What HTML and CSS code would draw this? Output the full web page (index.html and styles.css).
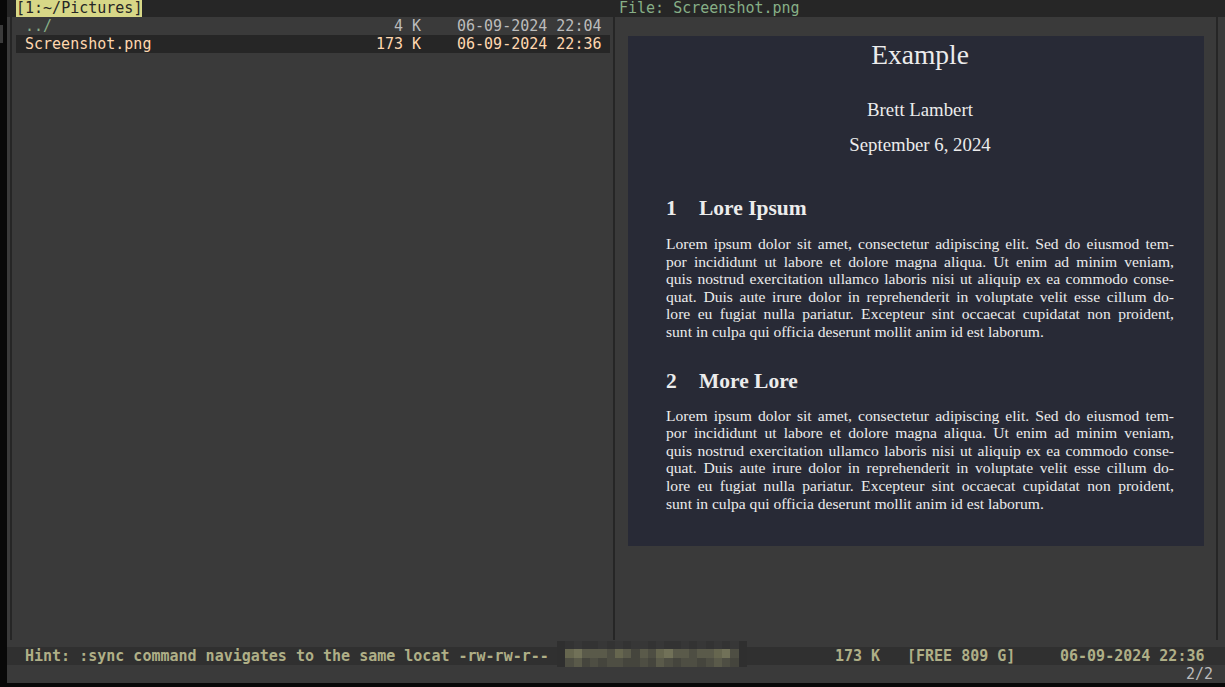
FILE: index.html
```html
<!DOCTYPE html>
<html>
<head>
<meta charset="utf-8">
<link rel="stylesheet" href="styles.css">
</head>
<body>
<div class="screen">
  <div class="strip"><div class="stub"></div></div>
  <div class="term">
    <div class="topbar">
      <span class="tab">[1:~/Pictures]</span>
      <span class="filelabel">File: Screenshot.png</span>
    </div>
    <div class="main">
      <div class="edge"></div>
      <div class="pane-left">
        <div class="row">
          <span class="name up">../</span>
          <span class="size">4 K</span>
          <span class="date">06-09-2024 22:04</span>
        </div>
        <div class="row sel">
          <span class="name">Screenshot.png</span>
          <span class="size">173 K</span>
          <span class="date">06-09-2024 22:36</span>
        </div>
      </div>
      <div class="edge"></div>
      <div class="pane-right">
        <div class="doc">
          <div class="title">Example</div>
          <div class="author">Brett Lambert</div>
          <div class="docdate">September 6, 2024</div>
          <div class="sec sec1"><span class="num">1</span>Lore Ipsum</div>
          <div class="para">
            <span class="ln">Lorem ipsum dolor sit amet, consectetur adipiscing elit. Sed do eiusmod tem-</span>
            <span class="ln">por incididunt ut labore et dolore magna aliqua. Ut enim ad minim veniam,</span>
            <span class="ln">quis nostrud exercitation ullamco laboris nisi ut aliquip ex ea commodo conse-</span>
            <span class="ln">quat. Duis aute irure dolor in reprehenderit in voluptate velit esse cillum do-</span>
            <span class="ln">lore eu fugiat nulla pariatur. Excepteur sint occaecat cupidatat non proident,</span>
            <span class="ln last">sunt in culpa qui officia deserunt mollit anim id est laborum.</span>
          </div>
          <div class="sec sec2"><span class="num">2</span>More Lore</div>
          <div class="para para2">
            <span class="ln">Lorem ipsum dolor sit amet, consectetur adipiscing elit. Sed do eiusmod tem-</span>
            <span class="ln">por incididunt ut labore et dolore magna aliqua. Ut enim ad minim veniam,</span>
            <span class="ln">quis nostrud exercitation ullamco laboris nisi ut aliquip ex ea commodo conse-</span>
            <span class="ln">quat. Duis aute irure dolor in reprehenderit in voluptate velit esse cillum do-</span>
            <span class="ln">lore eu fugiat nulla pariatur. Excepteur sint occaecat cupidatat non proident,</span>
            <span class="ln last">sunt in culpa qui officia deserunt mollit anim id est laborum.</span>
          </div>
        </div>
      </div>
      <div class="edge"></div>
    </div>
    <div class="gap"></div>
    <div class="status">
      <span class="hint">Hint: :sync command navigates to the same locat -rw-rw-r--</span>
      <span class="s-size">173 K</span>
      <span class="s-free">[FREE 809 G]</span>
      <span class="s-date">06-09-2024 22:36</span>
      <div class="mosaic">
        <i class="a"></i><i class="c"></i><i class="b"></i><i class="c"></i><i class="c"></i><i class="b"></i><i class="c"></i><i class="b"></i><i class="c"></i><i class="b"></i><i class="b"></i><i class="c"></i><i class="b"></i><i class="c"></i><i class="c"></i><i class="b"></i><i class="c"></i><i class="b"></i><i class="c"></i><i class="b"></i><i class="c"></i><i class="b"></i><i class="a"></i>
        <i class="a"></i><i class="e"></i><i class="d"></i><i class="f"></i><i class="f"></i><i class="f"></i><i class="g"></i><i class="e"></i><i class="f"></i><i class="h"></i><i class="f"></i><i class="g"></i><i class="e"></i><i class="d"></i><i class="f"></i><i class="f"></i><i class="g"></i><i class="f"></i><i class="f"></i><i class="e"></i><i class="d"></i><i class="g"></i><i class="a"></i>
        <i class="a"></i><i class="g"></i><i class="f"></i><i class="h"></i><i class="g"></i><i class="h"></i><i class="g"></i><i class="g"></i><i class="h"></i><i class="h"></i><i class="g"></i><i class="h"></i><i class="f"></i><i class="g"></i><i class="h"></i><i class="g"></i><i class="g"></i><i class="h"></i><i class="g"></i><i class="f"></i><i class="g"></i><i class="h"></i><i class="a"></i>
      </div>
    </div>
    <div class="bottom">
      <span class="pos">2/2</span>
    </div>
  </div>
</div>
</body>
</html>
```
FILE: styles.css
```css
html, body {
  margin: 0;
  padding: 0;
  background: #000;
  overflow: hidden;
}
.screen {
  display: flex;
  width: 1225px;
  height: 687px;
  background: #080808;
}
.strip {
  width: 7px;
  flex: none;
}
.stub {
  margin-top: 25px;
  width: 3px;
  height: 18px;
  background: #3a3a3a;
}
.term {
  width: 1218px;
  height: 683px;
  flex: none;
  background: #3a3a3a;
  display: flex;
  flex-direction: column;
  font-family: "DejaVu Sans Mono", monospace;
  font-size: 15px;
  line-height: 18px;
  position: relative;
  overflow: hidden;
}
.topbar {
  height: 17px;
  flex: none;
  background: #262626;
  display: flex;
  align-items: flex-start;
  padding-left: 9px;
  white-space: pre;
}
.tab {
  background: #d7d787;
  color: #262626;
  height: 17px;
  line-height: 16px;
  width: 126px;
}
.filelabel {
  margin-left: 477px;
  color: #87af87;
  line-height: 16px;
}
.main {
  height: 623px;
  flex: none;
  display: flex;
}
.edge {
  width: 9px;
  flex: none;
  box-sizing: border-box;
  padding-left: 3px;
}
.edge::before {
  content: "";
  display: block;
  width: 2px;
  height: 100%;
  background: #262626;
}
.pane-left {
  width: 594px;
  flex: none;
  display: flex;
  flex-direction: column;
}
.row {
  display: flex;
  height: 18px;
  color: #bcbcbc;
  white-space: pre;
}
.row.sel {
  background: #262626;
  color: #ffd7af;
}
.name {
  width: 351px;
  padding-left: 9px;
}
.name.up {
  color: #87af87;
}
.size {
  width: 45px;
  text-align: right;
}
.date {
  margin-left: 36px;
  width: 144px;
}
.pane-right {
  width: 594px;
  flex: none;
  padding: 19px 0 0 9px;
  box-sizing: border-box;
}
.doc {
  width: 576px;
  height: 510px;
  box-sizing: border-box;
  background: #282a36;
  color: #ececec;
  font-family: "Liberation Serif", serif;
  padding: 3px 30px 0 38px;
  display: flex;
  flex-direction: column;
}
.title {
  font-size: 27.5px;
  line-height: 32px;
  text-align: center;
}
.author {
  font-size: 18.8px;
  line-height: 22px;
  text-align: center;
  margin-top: 28px;
}
.docdate {
  font-size: 18.8px;
  line-height: 22px;
  text-align: center;
  margin-top: 13px;
}
.sec {
  font-size: 21.5px;
  line-height: 24px;
  font-weight: bold;
  margin-top: 40px;
}
.sec2 {
  margin-top: 28px;
}
.num {
  display: inline-block;
  width: 33px;
}
.para {
  margin-top: 15px;
  font-size: 15.6px;
  line-height: 17.6px;
}
.para2 {
  margin-top: 14px;
}
.ln {
  display: block;
  white-space: nowrap;
  text-align: justify;
  text-align-last: justify;
}
.ln.last {
  text-align: left;
  text-align-last: left;
}
.gap {
  height: 7px;
  flex: none;
}
.status {
  height: 18px;
  flex: none;
  background: #303030;
  color: #afaf87;
  font-weight: bold;
  display: flex;
  padding-left: 18px;
  white-space: pre;
  position: relative;
}
.hint {
  width: 810px;
}
.s-size {
  width: 72px;
}
.s-free {
  width: 153px;
}
.s-date {
  width: 144px;
}
.mosaic {
  position: absolute;
  left: 550px;
  top: -6px;
  width: 190px;
  height: 26px;
  display: grid;
  grid-template-columns: repeat(23, 1fr);
  grid-template-rows: 8px 9px 9px;
}
.mosaic i { display: block; }
.mosaic .a { background: #2f2f2f; }
.mosaic .b { background: #373737; }
.mosaic .c { background: #333333; }
.mosaic .d { background: #717158; }
.mosaic .e { background: #66664f; }
.mosaic .f { background: #5a5a4a; }
.mosaic .g { background: #4e4e43; }
.mosaic .h { background: #45453d; }
.bottom {
  height: 18px;
  flex: none;
  display: flex;
  justify-content: flex-end;
  padding-right: 12px;
  color: #bcbcbc;
}
```
